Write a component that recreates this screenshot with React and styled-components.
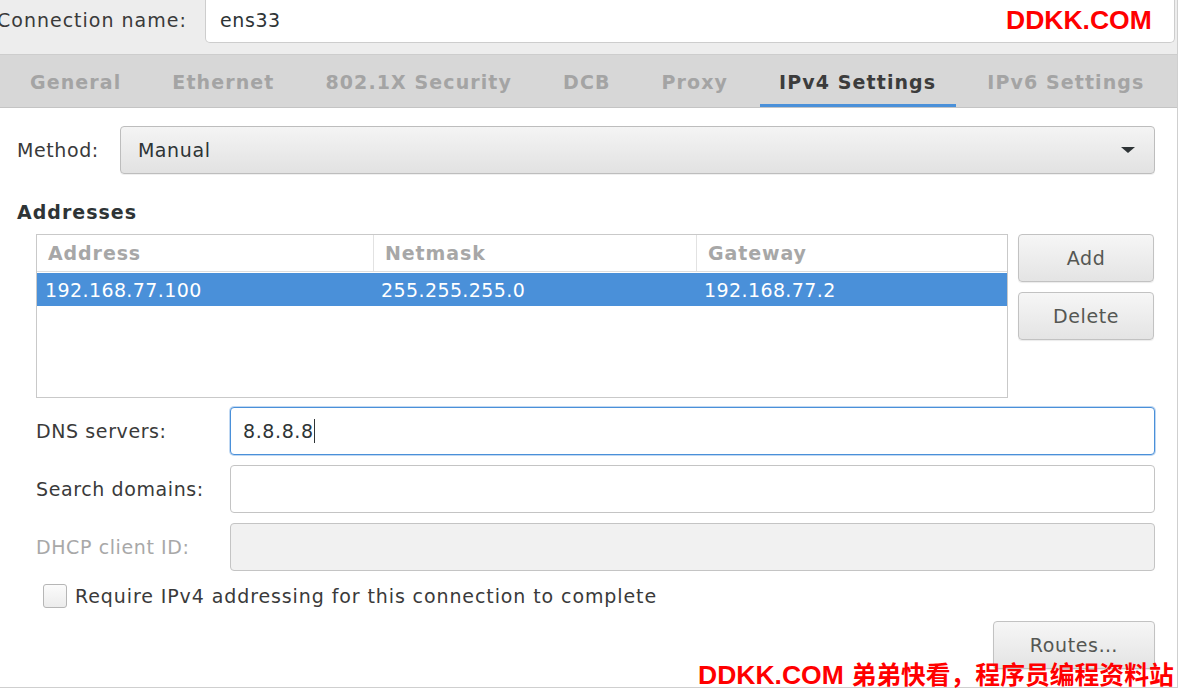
import React from 'react';
import styled, { createGlobalStyle } from 'styled-components';

const Global = createGlobalStyle`
  html, body {
    margin: 0;
    padding: 0;
    background: #ffffff;
    overflow: hidden;
  }
  body {
    font-family: 'DejaVu Sans', 'Noto Sans', sans-serif;
    color: #2e3436;
  }
`;

const Page = styled.div`
  position: relative;
  width: 1180px;
  height: 688px;
  overflow: hidden;
  background: #ffffff;
`;

const Dialog = styled.div`
  width: 1177px;
  height: 687px;
  border-right: 1px solid #cfcfcf;
  border-bottom: 1px solid #cfcfcf;
  display: flex;
  flex-direction: column;
  font-size: 19px;
  letter-spacing: 0.6px;
`;

const Header = styled.div`
  height: 55px;
  display: flex;
  align-items: flex-start;
  gap: 18px;
  background: #ededed;
  border-bottom: 1px solid #cdcdcd;
  box-sizing: border-box;
  padding-right: 2px;
`;

const HeaderLabel = styled.div`
  margin-left: -3px;
  width: 190px;
  line-height: 40px;
  letter-spacing: 1px;
  color: #3a3a3a;
  white-space: nowrap;
`;

const NameInput = styled.div`
  flex: 1;
  height: 43px;
  box-sizing: border-box;
  background: #fff;
  border: 1px solid #cdcdcd;
  border-top: none;
  border-radius: 0 0 5px 5px;
  padding-left: 14px;
  line-height: 40px;
  color: #2e3436;
`;

const TabBar = styled.div`
  height: 53px;
  display: flex;
  align-items: stretch;
  background: #d7d7d7;
  border-bottom: 1px solid #c4c4c4;
  padding-left: 4.5px;
  box-sizing: border-box;
`;

const Tab = styled.div`
  position: relative;
  padding: 2px 25.5px 0;
  display: flex;
  align-items: center;
  font-weight: bold;
  letter-spacing: 1.1px;
  color: ${p => (p.$active ? '#3c3c3c' : '#a4a4a4')};
  white-space: nowrap;

  &::after {
    content: '';
    display: ${p => (p.$active ? 'block' : 'none')};
    position: absolute;
    left: 6px;
    right: 6px;
    bottom: 0;
    height: 3px;
    background: #4a90d9;
  }
`;

const Body = styled.div`
  flex: 1;
  padding: 18px 22px 0 17px;
  display: flex;
  flex-direction: column;
`;

const MethodRow = styled.div`
  display: flex;
  align-items: center;
  gap: 21px;
`;

const Label = styled.div`
  color: ${p => (p.$dim ? '#a8a8a8' : '#3a3a3a')};
  width: ${p => p.$w || 'auto'};
  flex-shrink: 0;
  white-space: nowrap;
`;

const Combo = styled.div`
  flex: 1;
  height: 48px;
  box-sizing: border-box;
  border: 1px solid #bdbdbd;
  border-radius: 4px;
  background: linear-gradient(#f4f4f4, #e2e2e2);
  box-shadow: 0 1px 0 rgba(0, 0, 0, 0.06);
  display: flex;
  align-items: center;
  justify-content: space-between;
  padding: 0 18px 0 17px;
  color: #2e3436;
`;

const Section = styled.div`
  margin-top: 27px;
  font-weight: bold;
  letter-spacing: 1px;
  color: #2e3436;
`;

const AddrRow = styled.div`
  margin-top: 11px;
  padding-left: 19px;
  display: flex;
  gap: 10px;
`;

const Table = styled.div`
  width: 972px;
  height: 164px;
  box-sizing: border-box;
  border: 1px solid #c9c9c9;
  background: #fff;
`;

const Cols = styled.div`
  display: grid;
  grid-template-columns: 336px 323px 1fr;
  height: ${p => p.$h}px;
  align-items: center;
  background: ${p => (p.$sel ? '#4a90d9' : 'transparent')};
  color: ${p => (p.$sel ? '#ffffff' : '#a7a7a7')};
  font-weight: ${p => (p.$head ? 600 : 'normal')};
  border-bottom: ${p => (p.$head ? '1px solid #dedede' : 'none')};
`;

const Cell = styled.div`
  height: 100%;
  display: flex;
  align-items: center;
  padding-left: ${p => (p.$head ? 11 : 8)}px;
  border-left: ${p => (p.$head && p.$sep ? '1px solid #e2e2e2' : 'none')};
  letter-spacing: ${p => (p.$head ? 0.9 : 0.4)}px;
`;

const SideButtons = styled.div`
  display: flex;
  flex-direction: column;
  gap: 10px;
`;

const Button = styled.div`
  width: ${p => p.$w || 136}px;
  height: 48px;
  box-sizing: border-box;
  border: 1px solid #c2c2c2;
  border-radius: 4px;
  background: linear-gradient(#f6f6f6, #e4e4e4);
  box-shadow: 0 1px 1px rgba(0, 0, 0, 0.08);
  display: flex;
  align-items: center;
  justify-content: center;
  color: #555753;
`;

const Fields = styled.div`
  margin-top: 9px;
  padding-left: 19px;
  display: flex;
  flex-direction: column;
  gap: 10px;
`;

const FieldRow = styled.div`
  display: flex;
  align-items: center;
`;

const Entry = styled.div`
  flex: 1;
  height: 48px;
  box-sizing: border-box;
  border: 1px solid ${p => (p.$focus ? '#4a90d9' : '#c4c4c4')};
  box-shadow: ${p => (p.$focus ? '0 0 0 1px rgba(74,144,217,0.35)' : 'none')};
  border-radius: 4px;
  background: ${p => (p.$disabled ? '#f1f1f1' : '#ffffff')};
  display: flex;
  align-items: center;
  padding-left: 12px;
  color: #2e3436;
`;

const Caret = styled.span`
  display: inline-block;
  width: 1px;
  height: 24px;
  background: #2e3436;
`;

const CheckRow = styled.div`
  margin-top: 13px;
  padding-left: 26px;
  display: flex;
  align-items: center;
  gap: 8px;
  color: #3a3a3a;
  letter-spacing: 0.9px;
`;

const Box = styled.div`
  width: 24px;
  height: 24px;
  box-sizing: border-box;
  border: 1px solid #b6b6b6;
  border-radius: 3px;
  background: linear-gradient(#fbfbfb, #ececec);
`;

const Footer = styled.div`
  margin-top: 13px;
  display: flex;
  justify-content: flex-end;
`;

const Watermark = styled.div`
  position: absolute;
  color: #ff0000;
  font-family: 'Liberation Sans', 'Noto Sans CJK SC', sans-serif;
  font-weight: bold;
  font-size: 26.5px;
  line-height: 1;
  white-space: nowrap;
`;

const Cjk = styled.span`
  font-family: 'Noto Sans CJK SC', sans-serif;
  font-size: 24.8px;
  margin-left: 2px;
`;

const tabs = ['General', 'Ethernet', '802.1X Security', 'DCB', 'Proxy', 'IPv4 Settings', 'IPv6 Settings'];

export default function App() {
  return (
    <Page>
      <Global />
      <Dialog>
        <Header>
          <HeaderLabel>Connection name:</HeaderLabel>
          <NameInput>ens33</NameInput>
        </Header>
        <TabBar>
          {tabs.map(t => (
            <Tab key={t} $active={t === 'IPv4 Settings'}>{t}</Tab>
          ))}
        </TabBar>
        <Body>
          <MethodRow>
            <Label>Method:</Label>
            <Combo>
              <span>Manual</span>
              <svg width="16" height="8" viewBox="0 0 16 8">
                <path d="M1 1 L15 1 L8 7 Z" fill="#2e3436" />
              </svg>
            </Combo>
          </MethodRow>
          <Section>Addresses</Section>
          <AddrRow>
            <Table>
              <Cols $h={36} $head>
                <Cell $head>Address</Cell>
                <Cell $head $sep>Netmask</Cell>
                <Cell $head $sep>Gateway</Cell>
              </Cols>
              <Cols $h={33} $sel style={{ marginTop: 1 }}>
                <Cell>192.168.77.100</Cell>
                <Cell>255.255.255.0</Cell>
                <Cell>192.168.77.2</Cell>
              </Cols>
            </Table>
            <SideButtons>
              <Button>Add</Button>
              <Button>Delete</Button>
            </SideButtons>
          </AddrRow>
          <Fields>
            <FieldRow>
              <Label $w="194px">DNS servers:</Label>
              <Entry $focus>8.8.8.8<Caret /></Entry>
            </FieldRow>
            <FieldRow>
              <Label $w="194px">Search domains:</Label>
              <Entry />
            </FieldRow>
            <FieldRow>
              <Label $w="194px" $dim>DHCP client ID:</Label>
              <Entry $disabled />
            </FieldRow>
          </Fields>
          <CheckRow>
            <Box />
            <span>Require IPv4 addressing for this connection to complete</span>
          </CheckRow>
          <Footer>
            <Button $w={162}>Routes…</Button>
          </Footer>
        </Body>
      </Dialog>
      <Watermark style={{ left: 1006, top: 7 }}>DDKK.COM</Watermark>
      <Watermark style={{ left: 698, top: 661 }}>
        DDKK.COM<Cjk> 弟弟快看，程序员编程资料站</Cjk>
      </Watermark>
    </Page>
  );
}
